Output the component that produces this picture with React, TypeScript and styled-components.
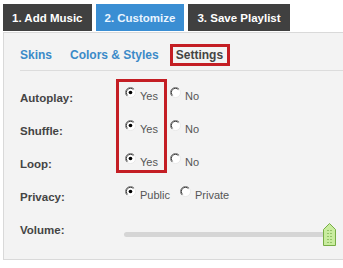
import { FC } from 'react';
import styled, { createGlobalStyle } from 'styled-components';

const GlobalStyle = createGlobalStyle`
  html, body {
    margin: 0;
    padding: 0;
    background: #ffffff;
    overflow: hidden;
  }
  body {
    font-family: "Liberation Sans", Arial, sans-serif;
  }
`;

const Page = styled.div`
  width: 343px;
  height: 268px;
  padding-top: 4px;
  box-sizing: border-box;
`;

const StepBar = styled.div`
  display: flex;
  gap: 4px;
  padding-left: 3px;
  height: 27px;
`;

const StepTab = styled.div<{ $active?: boolean }>`
  display: flex;
  align-items: center;
  padding: 0 9px;
  background: ${(p) => (p.$active ? '#3a8ed3' : '#404040')};
  color: ${(p) => (p.$active ? '#eaf5ff' : '#ffffff')};
  font-size: 11.5px;
  font-weight: bold;
`;

const Panel = styled.div`
  margin: 1px 0 0 3px;
  height: 228px;
  background: #f3f3f3;
  border: 1px solid #d9d9d9;
  border-right: none;
  padding-left: 16px;
  box-sizing: border-box;
`;

const SubTabs = styled.div`
  display: flex;
  align-items: center;
  gap: 18px;
  height: 31px;
  padding-top: 6px;
  border-bottom: 1px solid #dcdcdc;
`;

const SubTab = styled.div<{ $selected?: boolean }>`
  font-size: 12px;
  font-weight: bold;
  line-height: 16px;
  color: ${(p) => (p.$selected ? '#444444' : '#3b8ac8')};
  padding: ${(p) => (p.$selected ? '0 4px 0 3px' : '0')};
  border: ${(p) => (p.$selected ? '3px solid #c41e24' : 'none')};
  margin-left: ${(p) => (p.$selected ? '-7px' : '0')};
`;

const SettingsGrid = styled.div`
  display: grid;
  grid-template-columns: 96px 51px 1fr;
  grid-auto-rows: 33px;
  margin-top: 10px;
  margin-right: 13px;
`;

const FieldLabel = styled.div<{ $row: number }>`
  grid-column: 1;
  grid-row: ${(p) => p.$row};
  align-self: center;
  font-size: 11.5px;
  font-weight: bold;
  color: #444444;
`;

const Highlight = styled.div`
  grid-column: 2;
  grid-row: 1 / 4;
  margin: -2px 0 7px 0;
  border: 3px solid #c41e24;
`;

const OptionCell = styled.div<{ $row: number; $col: string; $pad: number }>`
  grid-column: ${(p) => p.$col};
  grid-row: ${(p) => p.$row};
  align-self: center;
  display: flex;
  gap: 10px;
  padding-left: ${(p) => p.$pad}px;
  margin-bottom: 6px;
  position: relative;
`;

const Option = styled.label`
  display: flex;
  align-items: flex-start;
  gap: 4px;
`;

const OptionText = styled.span`
  margin-top: 3px;
  font-size: 11px;
  line-height: 13px;
  color: #555555;
`;

const SliderCell = styled.div<{ $row: number }>`
  grid-column: 2 / 4;
  grid-row: ${(p) => p.$row};
  display: flex;
  align-items: center;
  padding-left: 8px;
  margin-top: 9px;
  height: 24px;
`;

const Track = styled.div`
  flex: 1;
  height: 5px;
  border-radius: 3px;
  background: #d5d5d5;
  display: flex;
  align-items: center;
  justify-content: flex-end;
`;

const Thumb = styled.div`
  width: 13px;
  height: 23px;
  margin-right: -6px;
  display: flex;
`;

const Radio: FC<{ checked?: boolean }> = ({ checked }) => (
  <svg width="11" height="11" viewBox="0 0 12 12">
    <circle cx="6" cy="6" r="5.5" fill="#ffffff" />
    <path d="M2.1 9.9 A5.5 5.5 0 0 1 9.9 2.1" fill="none" stroke="#7a7a7a" strokeWidth="1" />
    <path d="M2.8 9.2 A4.5 4.5 0 0 1 9.2 2.8" fill="none" stroke="#2e2e2e" strokeWidth="1" />
    <path d="M9.9 2.1 A5.5 5.5 0 0 1 2.1 9.9" fill="none" stroke="#e8e8e8" strokeWidth="1" />
    {checked && <circle cx="6" cy="6" r="2" fill="#000000" />}
  </svg>
);

const ThumbIcon = () => (
  <svg width="13" height="23" viewBox="0 0 13 23">
    <path d="M0.5 6.5 L6.5 0.5 L12.5 6.5 L12.5 22.5 L0.5 22.5 Z" fill="#c9ec9f" stroke="#77ad45" />
    {[7, 10, 13, 16, 19].map((y) => (
      <g key={y} fill="#5f9a31">
        <rect x="4.5" y={y} width="1" height="1" />
        <rect x="7.5" y={y} width="1" height="1" />
      </g>
    ))}
  </svg>
);

const yesNoRows = [
  { label: 'Autoplay:', row: 1 },
  { label: 'Shuffle:', row: 2 },
  { label: 'Loop:', row: 3 },
];

const FieldGroup: FC<{ label: string; row: number }> = ({ label, row }) => (
  <>
    <FieldLabel $row={row}>{label}</FieldLabel>
    <OptionCell $row={row} $col="2" $pad={9}>
      <Option>
        <Radio checked />
        <OptionText>Yes</OptionText>
      </Option>
    </OptionCell>
    <OptionCell $row={row} $col="3" $pad={3}>
      <Option>
        <Radio />
        <OptionText>No</OptionText>
      </Option>
    </OptionCell>
  </>
);

export default function App() {
  return (
    <>
      <GlobalStyle />
      <Page>
        <StepBar>
          <StepTab>1. Add Music</StepTab>
          <StepTab $active>2. Customize</StepTab>
          <StepTab>3. Save Playlist</StepTab>
        </StepBar>
        <Panel>
          <SubTabs>
            <SubTab>Skins</SubTab>
            <SubTab>Colors &amp; Styles</SubTab>
            <SubTab $selected>Settings</SubTab>
          </SubTabs>
          <SettingsGrid>
            <Highlight />
            {yesNoRows.map((r) => (
              <FieldGroup key={r.label} label={r.label} row={r.row} />
            ))}
            <FieldLabel $row={4}>Privacy:</FieldLabel>
            <OptionCell $row={4} $col="2 / 4" $pad={9}>
              <Option>
                <Radio checked />
                <OptionText>Public</OptionText>
              </Option>
              <Option>
                <Radio />
                <OptionText>Private</OptionText>
              </Option>
            </OptionCell>
            <FieldLabel $row={5}>Volume:</FieldLabel>
            <SliderCell $row={5}>
              <Track>
                <Thumb>
                  <ThumbIcon />
                </Thumb>
              </Track>
            </SliderCell>
          </SettingsGrid>
        </Panel>
      </Page>
    </>
  );
}
